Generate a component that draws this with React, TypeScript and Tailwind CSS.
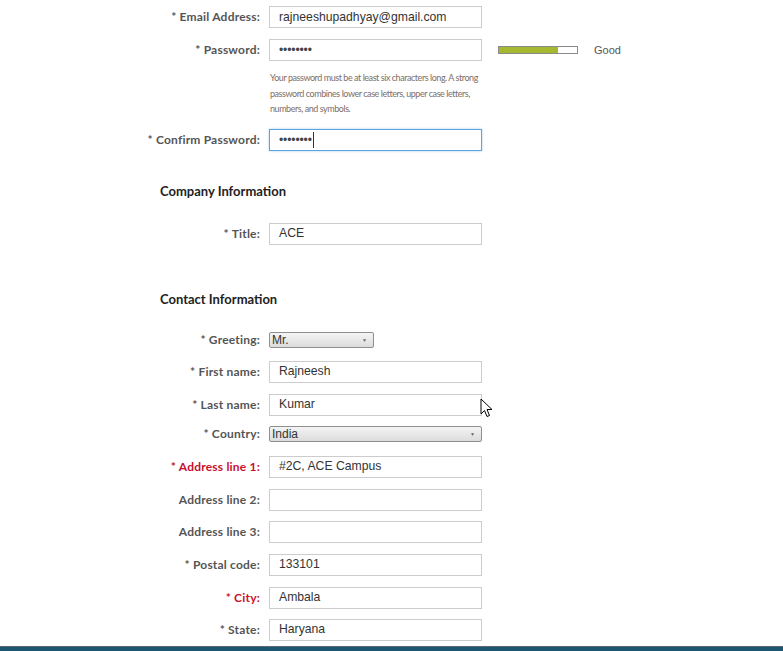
import React from "react";

const labelFont = { fontFamily: "Lato, 'Open Sans', sans-serif" };

function Label({ text, red, short }: { text: string; red?: boolean; short?: boolean }) {
  return (
    <div
      className={`w-[260px] shrink-0 text-right text-[12px] font-bold tracking-[0.2px] ${short ? "leading-[16px]" : "leading-[22px]"} ${red ? "text-[#c8102e]" : "text-[#555555]"}`}
      style={labelFont}
    >
      {text}
    </div>
  );
}

function TextInput({ value, focused, children }: { value?: string; focused?: boolean; children?: React.ReactNode }) {
  return (
    <div
      className={`ml-[9px] w-[213px] h-[22px] bg-white flex items-center pl-[9px] text-[12.2px] text-[#333333] ${focused ? "border border-[#5aa5e2] shadow-[0_0_2px_rgba(90,165,226,0.6)]" : "border border-[#cccccc]"}`}
      style={{ fontFamily: "'Liberation Sans', Arial, sans-serif" }}
    >
      {children ?? value}
    </div>
  );
}

function Select({ value, width }: { value: string; width: string }) {
  return (
    <div
      className={`ml-[9px] ${width} h-[16px] flex items-center justify-between border border-[#8f8f8f] rounded-[2px] bg-gradient-to-b from-[#f4f4f4] to-[#dcdcdc] pl-[2px] pr-[6px] text-[12px] leading-[14px] text-[#333333]`}
      style={{ fontFamily: "'Liberation Sans', Arial, sans-serif" }}
    >
      <span>{value}</span>
      <span className="text-[5px] text-[#666666]">▼</span>
    </div>
  );
}

function Row({ children, mt }: { children: React.ReactNode; mt: string }) {
  return <div className={`flex items-center ${mt}`}>{children}</div>;
}

function Dots() {
  return <span className="text-[12px] tracking-[-0.1px] text-[#444444]">••••••••</span>;
}

function Heading({ text, mt }: { text: string; mt: string }) {
  return (
    <div className={`${mt} pl-[160px] text-[13px] font-bold leading-[16px] text-[#222222]`} style={labelFont}>
      {text}
    </div>
  );
}

export default function App() {
  return (
    <div className="relative w-[783px] h-[651px] overflow-hidden bg-white flex flex-col">
      <Row mt="mt-[6px]">
        <Label text="* Email Address:" />
        <TextInput value="rajneeshupadhyay@gmail.com" />
      </Row>
      <Row mt="mt-[11px]">
        <Label text="* Password:" />
        <TextInput>
          <Dots />
        </TextInput>
        <div className="ml-[16px] w-[80px] h-[8px] border border-[#8a8a8a] bg-white flex">
          <div className="w-[59px] h-full bg-[#a5b830]" />
        </div>
        <span
          className="ml-[16px] text-[11px] text-[#555555]"
          style={{ fontFamily: "'Liberation Sans', Arial, sans-serif" }}
        >
          Good
        </span>
      </Row>
      <div
        className="mt-[9px] ml-[270px] whitespace-nowrap text-[9px] tracking-[-0.45px] leading-[15.5px] text-[#7d6e68]"
        style={{ fontFamily: "Lato, sans-serif" }}
      >
        Your password must be at least six characters long. A strong
        <br />
        password combines lower case letters, upper case letters,
        <br />
        numbers, and symbols.
      </div>
      <Row mt="mt-[12px]">
        <Label text="* Confirm Password:" />
        <TextInput focused>
          <Dots />
          <span className="ml-[1px] w-px h-[16px] bg-[#333333]" />
        </TextInput>
      </Row>

      <Heading text="Company Information" mt="mt-[32px]" />
      <Row mt="mt-[24px]">
        <Label text="* Title:" />
        <TextInput value="ACE" />
      </Row>

      <Heading text="Contact Information" mt="mt-[46px]" />
      <Row mt="mt-[25px]">
        <Label text="* Greeting:" short />
        <Select value="Mr." width="w-[105px]" />
      </Row>
      <Row mt="mt-[13px]">
        <Label text="* First name:" />
        <TextInput value="Rajneesh" />
      </Row>
      <Row mt="mt-[11px]">
        <Label text="* Last name:" />
        <TextInput value="Kumar" />
      </Row>
      <Row mt="mt-[10px]">
        <Label text="* Country:" short />
        <Select value="India" width="w-[213px]" />
      </Row>
      <Row mt="mt-[14px]">
        <Label text="* Address line 1:" red />
        <TextInput value="#2C, ACE Campus" />
      </Row>
      <Row mt="mt-[11px]">
        <Label text="Address line 2:" />
        <TextInput value="" />
      </Row>
      <Row mt="mt-[10px]">
        <Label text="Address line 3:" />
        <TextInput value="" />
      </Row>
      <Row mt="mt-[11px]">
        <Label text="* Postal code:" />
        <TextInput value="133101" />
      </Row>
      <Row mt="mt-[11px]">
        <Label text="* City:" red />
        <TextInput value="Ambala" />
      </Row>
      <Row mt="mt-[10px]">
        <Label text="* State:" />
        <TextInput value="Haryana" />
      </Row>

      <div className="mt-[5px] h-px bg-[#5d6b70]" />
      <div className="h-[4px] bg-[#1c5670]" />

      <svg className="absolute left-[480px] top-[398px]" width="13" height="20" viewBox="0 0 13 20">
        <path d="M1 1 L1 16 L4.5 12.5 L7 18.5 L9.5 17.5 L7 11.5 L12 11.5 Z" fill="white" stroke="black" strokeWidth="1" strokeLinejoin="round" />
      </svg>
    </div>
  );
}
